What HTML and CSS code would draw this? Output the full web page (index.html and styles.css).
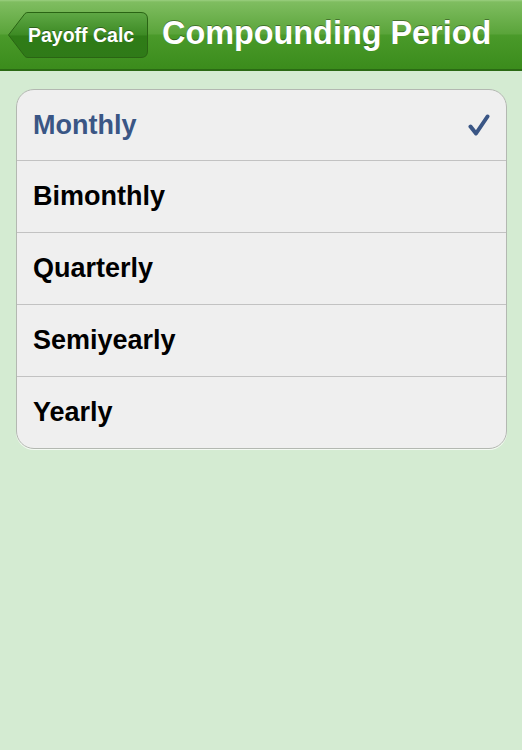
FILE: index.html
```html
<!DOCTYPE html>
<html>
<head>
<meta charset="utf-8">
<link rel="stylesheet" href="styles.css">
</head>
<body>
<div class="navbar">
  <div class="back">
    <svg class="back-shape" width="142" height="48" viewBox="0 0 142 48">
      <defs>
        <linearGradient id="bg" x1="0" y1="0" x2="0" y2="1">
          <stop offset="0" stop-color="#5fa845"/>
          <stop offset="0.5" stop-color="#3d8a24"/>
          <stop offset="0.52" stop-color="#2f7c17"/>
          <stop offset="1" stop-color="#2f7a18"/>
        </linearGradient>
      </defs>
      <path d="M1.5 24 L18 2.5 Q19 1.5 21 1.5 L134 1.5 Q140.5 1.5 140.5 8 L140.5 40 Q140.5 46.5 134 46.5 L21 46.5 Q19 46.5 18 45.5 Z" fill="url(#bg)" stroke="#2a6414" stroke-width="1"/>
    </svg>
    <span class="back-label">Payoff Calc</span>
  </div>
  <div class="title">Compounding Period</div>
</div>
<div class="content">
  <div class="card">
    <div class="row selected"><span>Monthly</span>
      <svg class="check" width="22" height="22" viewBox="0 0 22 22"><path d="M2.5 12.5 L8 19.5 L19.5 2.5" fill="none" stroke="#3a5685" stroke-width="4" stroke-linecap="round" stroke-linejoin="round"/></svg>
    </div>
    <div class="row"><span>Bimonthly</span></div>
    <div class="row"><span>Quarterly</span></div>
    <div class="row"><span>Semiyearly</span></div>
    <div class="row"><span>Yearly</span></div>
  </div>
</div>
</body>
</html>
```
FILE: styles.css
```css
html, body {
  margin: 0;
  padding: 0;
  width: 522px;
  height: 750px;
  background: #d4ebd2;
  font-family: "Liberation Sans", Arial, sans-serif;
  overflow: hidden;
}
.navbar {
  height: 69px;
  border-bottom: 2px solid #2b6a14;
  background: linear-gradient(to bottom, #9bcf80 0px, #7fbd60 2px, #5aa43a 34px, #4a9a2a 35px, #3b8c1c 69px);
  display: flex;
  align-items: center;
  padding-left: 7px;
  box-sizing: content-box;
}
.back {
  position: relative;
  width: 142px;
  height: 48px;
  display: flex;
  align-items: center;
  margin-top: 1px;
}
.back-shape {
  position: absolute;
  left: 0;
  top: 0;
}
.back-label {
  position: relative;
  color: #fff;
  font-weight: bold;
  font-size: 19.5px;
  margin-left: 21px;
  text-shadow: 0 -1px 0 rgba(0,0,0,0.35);
}
.title {
  color: #fff;
  font-weight: bold;
  font-size: 32.4px;
  margin-left: 13px;
  margin-top: -2px;
  text-shadow: 0 -1px 0 rgba(0,0,0,0.35);
}
.content {
  padding: 18px 15px 0 16px;
}
.card {
  background: #efefef;
  border: 1px solid #b3b8b1;
  border-radius: 18px;
  box-shadow: 0 1px 0 #f4faf3;
  overflow: hidden;
}
.row {
  height: 71px;
  display: flex;
  align-items: center;
  justify-content: space-between;
  padding: 0 16px 0 16px;
  border-top: 1px solid #c2c2c2;
  font-weight: bold;
  font-size: 27px;
  color: #000;
}
.row:first-child {
  border-top: none;
  height: 70px;
}
.row.selected {
  color: #3a5685;
}
```
